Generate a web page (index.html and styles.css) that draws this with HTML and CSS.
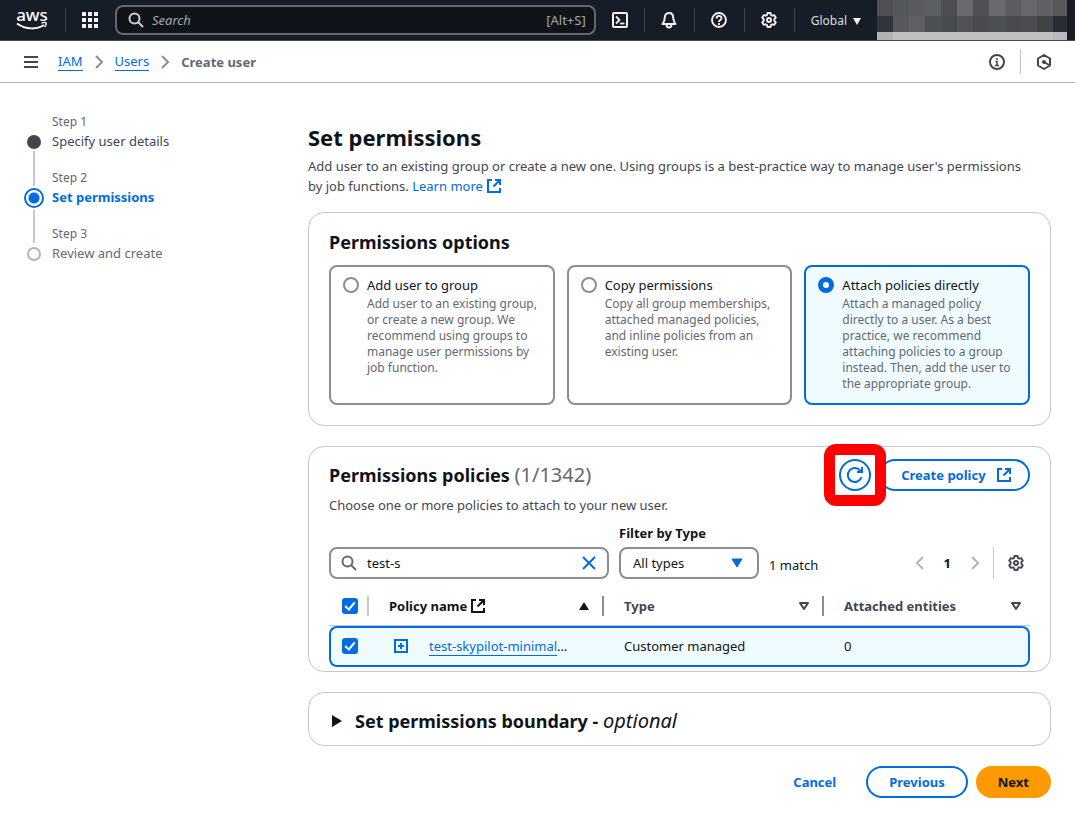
FILE: index.html
```html
<!DOCTYPE html>
<html lang="en">
<head>
<meta charset="utf-8">
<title>Create user | IAM</title>
<link rel="stylesheet" href="styles.css">
</head>
<body>
<header class="topbar">
  <a class="logo" href="#" aria-label="AWS home">
    <svg width="32" height="22" viewBox="0 0 32 22"><text class="logo-text" x="16" y="12" text-anchor="middle">aws</text><path d="M1 14.500c9 6.500 20 6 27 1.500" fill="none" stroke="#fff" stroke-width="2"/><path d="M25.500 14.200c2-.8 4-.9 4.500-.4s0 2.700-1.400 4.200" fill="none" stroke="#fff" stroke-width="1.400"/></svg>
  </a>
  <span class="bar-rule"></span>
  <button class="icon-btn apps" aria-label="Services">
    <svg width="16" height="16" fill="#f3f3f7"><path d="M0 0h4v4H0zM6 0h4v4H6zM12 0h4v4h-4zM0 6h4v4H0zM6 6h4v4H6zM12 6h4v4h-4zM0 12h4v4H0zM6 12h4v4H6zM12 12h4v4h-4z"/></svg>
  </button>
  <label class="top-search">
    <svg width="16" height="16" fill="none" stroke="#d0d0d6" stroke-width="2"><circle cx="6.500" cy="6.500" r="5"/><path d="M10 10l5 5"/></svg>
    <input type="search" placeholder="Search" aria-label="Search">
    <span class="shortcut">[Alt+S]</span>
  </label>
  <button class="icon-btn cell first" aria-label="CloudShell">
    <svg width="16" height="16" fill="none" stroke="#f3f3f7" stroke-width="2" stroke-linejoin="round"><rect x="1" y="1" width="14" height="14" rx="1"/><path d="M4 4.500L7.500 8 4 11.500" stroke-width="1.800"/><path d="M8 11.500h4.500" stroke-width="1.800"/></svg>
  </button>
  <button class="icon-btn cell" aria-label="Notifications">
    <svg width="16" height="16" fill="none" stroke="#f3f3f7" stroke-width="2" stroke-linejoin="round"><path d="M8 1C5 1 3.800 3 3.800 5.500 3.800 8.500 3 10 1.500 12h13C13 10 12.200 8.500 12.200 5.500 12.200 3 11 1 8 1z"/><path d="M5.500 13c.5 3.300 4.500 3.300 5 0"/></svg>
  </button>
  <button class="icon-btn cell" aria-label="Help">
    <svg width="16" height="16" fill="none" stroke="#f3f3f7" stroke-width="1.900"><circle cx="8" cy="8" r="7"/><path d="M5.500 6.500C5.500 3 10.500 3 10.500 6.200 10.500 8 8 8 8 10"/><path d="M8 11v2"/></svg>
  </button>
  <button class="icon-btn cell" aria-label="Settings">
    <svg width="16" height="16" viewBox="0 0 16 16" fill="none" stroke="#f3f3f7" stroke-width="1.900" stroke-linejoin="round"><path d="M6.500 1h3l.5 2 1.300.7 2-.6 1.500 2.600L13.300 7.200v1.600l1.500 1.500-1.500 2.600-2-.6-1.300.7-.5 2h-3l-.5-2-1.300-.7-2 .6-1.500-2.600 1.500-1.500V7.200L1.200 5.700l1.500-2.600 2 .6L6 3z"/><circle cx="8" cy="8" r="2"/></svg>
  </button>
  <button class="region">Global <svg width="8" height="7" fill="#f3f3f7"><path d="M0 0h8L4 7z"/></svg></button>
  <svg class="account" width="190" height="40" shape-rendering="crispEdges">
    <path fill="#4f5052" d="M0 0h16v16H0z"/><path fill="#53575b" d="M16 0h16v16H16z"/><path fill="#5a5b5d" d="M32 0h16v16H32z"/><path fill="#5b5f61" d="M48 0h16v16H48z"/><path fill="#4b4f51" d="M64 0h16v16H64z"/><path fill="#6b6b6e" d="M80 0h16v16H80z"/><path fill="#505053" d="M96 0h16v16H96z"/><path fill="#6a6b6e" d="M112 0h16v16h-16z"/><path fill="#5c5d61" d="M128 0h16v16h-16z"/><path fill="#67686b" d="M144 0h16v16h-16z"/><path fill="#606164" d="M160 0h16v16h-16z"/><path fill="#59595c" d="M176 0h14v16h-14z"/>
    <path fill="#32343d" d="M0 16h16v16H0z"/><path fill="#59595c" d="M16 16h16v16H16z"/><path fill="#5f6063" d="M32 16h16v16H32z"/><path fill="#4b4f53" d="M48 16h16v16H48z"/><path fill="#474b4e" d="M64 16h16v16H64z"/><path fill="#4f5358" d="M80 16h16v16H80z"/><path fill="#4b4a4f" d="M96 16h16v16H96z"/><path fill="#4b4f54" d="M112 16h16v16h-16z"/><path fill="#474a4e" d="M128 16h16v16h-16z"/><path fill="#4d4d51" d="M144 16h16v16h-16z"/><path fill="#404447" d="M160 16h16v16h-16z"/><path fill="#282c34" d="M176 16h14v16h-14z"/>
    <path fill="#b2b2b2" d="M0 32h16v8H0z"/><path fill="#bebfc1" d="M16 32h160v8H16z"/><path fill="#b9b9ba" d="M176 32h14v8h-14z"/>
  </svg>
</header>

<nav class="crumbs" aria-label="Breadcrumbs">
  <button class="icon-btn menu" aria-label="Open navigation"><svg width="14" height="12" fill="none" stroke="#424650" stroke-width="2"><path d="M0 1h14M0 6h14M0 11h14"/></svg></button>
  <a href="#">IAM</a>
  <svg class="chev" width="8" height="14" fill="none" stroke="#8c8c94" stroke-width="2"><path d="M1 1l6 6-6 6"/></svg>
  <a href="#">Users</a>
  <svg class="chev" width="8" height="14" fill="none" stroke="#8c8c94" stroke-width="2"><path d="M1 1l6 6-6 6"/></svg>
  <span class="current">Create user</span>
  <span class="crumb-tools">
    <button class="icon-btn" aria-label="Info"><svg width="16" height="16" fill="none" stroke="#424650" stroke-width="2"><circle cx="8" cy="8" r="7"/><path d="M8 4v2M6.500 7.500H8V12M6 11.500h4" stroke-width="1.500"/></svg></button>
    <span class="tool-rule"></span>
    <button class="icon-btn" aria-label="Assistant"><svg width="16" height="16" fill="none" stroke="#424650" stroke-width="2" stroke-linejoin="round"><path d="M8 1l6 3.500v7L8 15l-6-3.500v-7z"/><circle cx="8" cy="8" r="2" fill="#424650" stroke="none"/><path d="M8 8l5 3"/></svg></button>
  </span>
</nav>

<div class="layout">
  <ol class="steps">
    <li class="step done"><small>Step 1</small><span class="mark"><i></i></span><a href="#">Specify user details</a></li>
    <li class="step active"><small>Step 2</small><span class="mark"><i></i></span><b>Set permissions</b></li>
    <li class="step"><small>Step 3</small><span class="mark"><i></i></span><span>Review and create</span></li>
  </ol>

  <main class="main">
    <h1>Set permissions</h1>
    <p class="lead">Add user to an existing group or create a new one. Using groups is a best-practice way to manage user's permissions by job functions. <a href="#">Learn more <svg class="ext" width="14" height="14" fill="none" stroke="currentColor" stroke-width="2"><path d="M5 1H1v12h12V9"/><path d="M8 1h5v5M13 1L6.500 7.500"/></svg></a></p>

    <section class="card options">
      <h2>Permissions options</h2>
      <div class="tiles">
        <label class="tile"><input type="radio" name="option"><span><strong>Add user to group</strong><small>Add user to an existing group, or create a new group. We recommend using groups to manage user permissions by job function.</small></span></label>
        <label class="tile"><input type="radio" name="option"><span><strong>Copy permissions</strong><small>Copy all group memberships, attached managed policies, and inline policies from an existing user.</small></span></label>
        <label class="tile selected"><input type="radio" name="option" checked><span><strong>Attach policies directly</strong><small>Attach a managed policy directly to a user. As a best practice, we recommend attaching policies to a group instead. Then, add the user to the appropriate group.</small></span></label>
      </div>
    </section>

    <section class="card policies">
      <div class="card-head">
        <h2>Permissions policies <span class="count">(1/1342)</span></h2>
        <div class="actions">
          <span class="refresh-wrap"><button class="btn round" aria-label="Refresh"><svg width="16" height="16" fill="none" stroke="currentColor" stroke-width="2"><path d="M14.500 10A7 7 0 1 1 13.500 4"/><path d="M15 0v5h-5"/></svg></button></span>
          <button class="btn create">Create policy <svg class="ext" width="14" height="14" fill="none" stroke="currentColor" stroke-width="2"><path d="M5 1H1v12h12V9"/><path d="M8 1h5v5M13 1L6.500 7.500"/></svg></button>
        </div>
      </div>
      <p class="sub">Choose one or more policies to attach to your new user.</p>
      <div class="filters">
        <div class="field find">
          <svg width="16" height="16" fill="none" stroke="#656871" stroke-width="2"><circle cx="6.500" cy="6.500" r="5"/><path d="M10 10l5 5"/></svg>
          <input type="text" value="test-s" aria-label="Find policies">
          <button class="icon-btn" aria-label="Clear"><svg width="14" height="14" fill="none" stroke="#006ce0" stroke-width="2"><path d="M1 1l12 12M13 1L1 13"/></svg></button>
        </div>
        <div class="type-filter">
          <label for="type">Filter by Type</label>
          <div class="field pick"><select id="type"><option>All types</option></select><svg width="10" height="8" fill="#006ce0" stroke="#006ce0" stroke-linejoin="round"><path d="M0 0h10L5 8z"/></svg></div>
        </div>
        <span class="matches">1 match</span>
        <div class="pager">
          <button class="icon-btn" aria-label="Previous page"><svg width="8" height="14" fill="none" stroke="#b4b4bb" stroke-width="2"><path d="M7 1L1 7l6 6"/></svg></button>
          <button class="page">1</button>
          <button class="icon-btn" aria-label="Next page"><svg width="8" height="14" fill="none" stroke="#b4b4bb" stroke-width="2"><path d="M1 1l6 6-6 6"/></svg></button>
          <span class="pager-rule"></span>
          <button class="icon-btn" aria-label="Preferences"><svg width="16" height="16" viewBox="0 0 16 16" fill="none" stroke="#424650" stroke-width="1.900" stroke-linejoin="round"><path d="M6.500 1h3l.5 2 1.300.7 2-.6 1.500 2.600L13.300 7.200v1.600l1.500 1.500-1.500 2.600-2-.6-1.300.7-.5 2h-3l-.5-2-1.300-.7-2 .6-1.500-2.600 1.500-1.500V7.200L1.200 5.700l1.500-2.600 2 .6L6 3z"/><circle cx="8" cy="8" r="2"/></svg></button>
        </div>
      </div>
      <table class="grid">
        <colgroup><col class="c-check"><col class="c-name"><col class="c-type"><col></colgroup>
        <thead><tr>
          <th><div class="th light"><input type="checkbox" checked aria-label="Select all"></div></th>
          <th><div class="th sorted"><span>Policy name <svg class="ext" width="14" height="14" fill="none" stroke="currentColor" stroke-width="2"><path d="M5 1H1v12h12V9"/><path d="M8 1h5v5M13 1L6.500 7.500"/></svg></span><svg width="10" height="8" fill="currentColor"><path d="M0 8h10L5 0z"/></svg></div></th>
          <th><div class="th"><span>Type</span><svg width="10" height="8" fill="none" stroke="currentColor" stroke-width="2" stroke-linejoin="round"><path d="M1 1h8L5 7z"/></svg></div></th>
          <th><div class="th last"><span>Attached entities</span><svg width="10" height="8" fill="none" stroke="currentColor" stroke-width="2" stroke-linejoin="round"><path d="M1 1h8L5 7z"/></svg></div></th>
        </tr></thead>
        <tbody><tr>
          <td><input type="checkbox" checked aria-label="Select policy"></td>
          <td><div class="name"><button class="icon-btn" aria-label="Expand"><svg width="14" height="14" fill="none" stroke="#006ce0" stroke-width="2"><path d="M1 1h12v12H1zM4 7h6M7 4v6"/></svg></button><span><a href="#">test-skypilot-minimal</a>…</span></div></td>
          <td>Customer managed</td>
          <td>0</td>
        </tr></tbody>
      </table>
    </section>

    <section class="card boundary">
      <h2><button class="expander"><svg width="10" height="12" fill="#0f141a"><path d="M0 0l10 6-10 6z"/></svg><span>Set permissions boundary - <em>optional</em></span></button></h2>
    </section>

    <div class="footer">
      <button class="btn link">Cancel</button>
      <button class="btn prev">Previous</button>
      <button class="btn primary">Next</button>
    </div>
  </main>
</div>
</body>
</html>
```
FILE: styles.css
```css
*, ::before, ::after { box-sizing: border-box; }
body { margin: 0; background: #fff; color: #0f141a; font: 13px/20px "Noto Sans", sans-serif; }
h1, h2, p, ol { margin: 0; padding: 0; }
h1 { font-size: 22px; line-height: 30px; }
h2 { font-size: 18px; line-height: 24px; }
a { color: #006ce0; text-decoration: none; }
svg { display: block; flex: none; overflow: visible; }
button, input, select { font: inherit; color: inherit; }
button { cursor: pointer; }
input { min-width: 0; }
.icon-btn { display: flex; align-items: center; justify-content: center; padding: 0; border: 0; background: none; }
.ext { display: inline-block; vertical-align: -2px; }

.topbar { display: flex; align-items: center; height: 41px; padding: 0 8px 0 16px; background: #161d26; border-bottom: 1px solid #424650; color: #dedee3; }
.logo { display: block; width: 32px; margin-right: 17px; }
.logo-text { font: 500 17px "Noto Sans", sans-serif; fill: #fff; }
.bar-rule { width: 1px; height: 24px; background: #424650; }
.apps { width: 49px; padding-right: 1px; }
.top-search { display: flex; flex: 1; align-items: center; gap: 8px; min-width: 0; height: 30px; padding: 0 8px 0 11px; border: 2px solid #656871; border-radius: 8px; background: #0f141a; }
.top-search input { flex: 1; padding: 0; border: 0; outline: 0; background: none; }
.top-search input::placeholder { color: #a4a4ad; font-style: italic; opacity: 1; }
.shortcut { color: #a4a4ad; }
.cell { width: 50px; height: 24px; border-left: 1px solid #424650; }
.cell.first { width: 48px; border: 0; }
.region { display: flex; align-items: center; gap: 6px; height: 24px; padding: 2px 16px 0; border: 0; border-left: 1px solid #424650; background: none; font-size: 12px; }
.account { align-self: flex-start; }

.crumbs { display: flex; align-items: center; height: 42px; padding: 0 23px 0 24px; border-bottom: 1px solid #b4b4bb; }
.crumbs a, .name a { border-bottom: 1px solid; line-height: 18px; }
.menu { width: 14px; margin-right: 20px; }
.chev { margin: 0 12px; }
.current { color: #656871; font-weight: 700; }
.crumb-tools { display: flex; align-items: center; gap: 15px; margin-left: auto; }
.tool-rule { width: 1px; height: 25px; background: #c6c6cd; }

.layout { display: grid; grid-template-columns: 260px minmax(0, 1fr); gap: 24px; padding: 30px 24px 35px; }
.steps { list-style: none; }
.step { display: grid; grid-template-columns: 20px 1fr; grid-template-rows: 18px 20px; column-gap: 8px; height: 56px; color: #656871; }
.step > * { grid-column: 2; }
.step small { font-size: 12px; line-height: 18px; }
.step > .mark { display: flex; flex-direction: column; grid-column: 1; grid-row: 2; align-items: center; height: 56px; padding-top: 4px; }
.mark i { width: 14px; height: 14px; flex: none; border: 2px solid #b4b4bb; border-radius: 50%; }
.step:not(:last-child) .mark::after { content: ""; width: 2px; height: 35px; margin-top: 2px; background: #c6c6cd; }
.done a { color: #424650; }
.done i { border-color: #424650; background: #424650; }
.active b { color: #006ce0; }
.active > .mark { padding-top: 1px; }
.active i { width: 20px; height: 20px; border-color: #006ce0; background: radial-gradient(circle, #006ce0 5px, #fff 6px); }

.main { padding-top: 9px; }
.lead { margin: 4px 0 16px; padding-right: 16px; color: #424650; }
.lead .ext { margin-left: 1px; }
.card { border: 1px solid #c6c6cd; border-radius: 16px; margin-bottom: 20px; }
.options { padding: 17px 20px 20px; }
.tiles { display: grid; grid-template-columns: repeat(3, minmax(0, 1fr)); gap: 12px; margin-top: 11px; }
.tile { display: flex; gap: 8px; min-height: 140px; padding: 8px 12px; border: 2px solid #8c8c94; border-radius: 8px; }
.tile.selected { border-color: #006ce0; background: #f0fbff; }
.tile input { flex: none; appearance: none; width: 16px; height: 16px; margin: 2px 0 0; border: 2px solid #8c8c94; border-radius: 50%; background: #fff; }
.tile input:checked { border: 5px solid #006ce0; }
.tile strong { display: block; font-weight: 400; }
.tile small { display: block; margin-top: 1px; color: #656871; font-size: 12px; line-height: 16px; }

.policies { padding: 12px 20px 4px; }
.card-head { display: flex; align-items: center; justify-content: space-between; }
.count { color: #656871; font-size: 20px; font-weight: 400; }
.actions { display: flex; gap: 8px; }
.btn { height: 32px; padding: 0 20px; border: 2px solid #006ce0; border-radius: 16px; background: #fff; color: #006ce0; font-weight: 700; }
.round { display: flex; align-items: center; justify-content: center; width: 32px; padding: 0; }
.create { padding: 0 17px 0 20px; }
.create .ext { margin-left: 8px; }
.refresh-wrap { position: relative; }
.refresh-wrap::after { content: ""; position: absolute; inset: -15px; border: 11px solid #f00; border-radius: 12px; pointer-events: none; }
.sub { margin: 4px 0 8px; color: #424650; }
.filters { display: flex; align-items: flex-end; gap: 10px; }
.field { display: flex; align-items: center; height: 32px; border: 2px solid #8c8c94; border-radius: 8px; }
.find { width: 280px; gap: 10px; padding: 0 11px 0 10px; }
.find input { flex: 1; padding: 0; border: 0; outline: 0; background: none; }
.type-filter label { display: block; margin-bottom: 4px; font-weight: 700; }
.pick { position: relative; width: 140px; }
.pick select { width: 100%; height: 100%; padding: 0 12px; border: 0; outline: 0; appearance: none; background: none; }
.pick svg { position: absolute; right: 15px; pointer-events: none; }
.matches { padding: 0 0 4px; }
.pager { display: flex; align-items: center; height: 32px; margin-left: auto; padding-right: 6px; }
.page { margin: 0 20px; padding: 0; border: 0; background: none; font-weight: 700; }
.pager-rule { width: 1px; height: 32px; margin: 0 14px; background: #c6c6cd; }

.grid { width: 100%; margin-top: 7px; table-layout: fixed; border-spacing: 0; }
.c-check { width: 40px; }
.c-name { width: 235px; }
.c-type { width: 220px; }
.grid th { height: 40px; padding: 0; border-bottom: 1px solid #c6c6cd; text-align: left; color: #424650; }
.th { display: flex; align-items: center; justify-content: space-between; height: 20px; padding: 0 13px 0 20px; border-right: 2px solid #8c8c94; }
.th.light { padding: 0 0 0 13px; border-color: #c6c6cd; }
.th.sorted { color: #0f141a; }
.th.last { padding-right: 9px; border: 0; }
.grid input { display: block; appearance: none; position: relative; width: 16px; height: 16px; margin: 0; border-radius: 3px; background: #006ce0; }
.grid input::after { content: ""; position: absolute; left: 5px; top: 2px; width: 6px; height: 10px; border: solid #fff; border-width: 0 2px 2px 0; transform: rotate(40deg); }
.grid td { height: 41px; padding: 0 20px 2px; border: solid #006ce0; border-width: 2px 0; background: #f0fbff; }
.grid td:first-child { padding: 0 0 1px 11px; border-left-width: 2px; border-radius: 8px 0 0 8px; }
.grid td:last-child { border-right-width: 2px; border-radius: 0 8px 8px 0; }
.name { display: flex; align-items: center; gap: 21px; padding-left: 5px; }

.boundary { padding: 16px 20px 12px; }
.expander { display: flex; align-items: center; gap: 13px; padding: 0 0 0 3px; border: 0; background: none; text-align: left; }
.expander em { font-size: 20px; font-weight: 400; }
.footer { display: flex; justify-content: flex-end; gap: 8px; }
.link { border-color: transparent; }
.prev { padding: 0 21px; }
.primary { border-color: #f90; background: #f90; color: #0f141a; }
```
